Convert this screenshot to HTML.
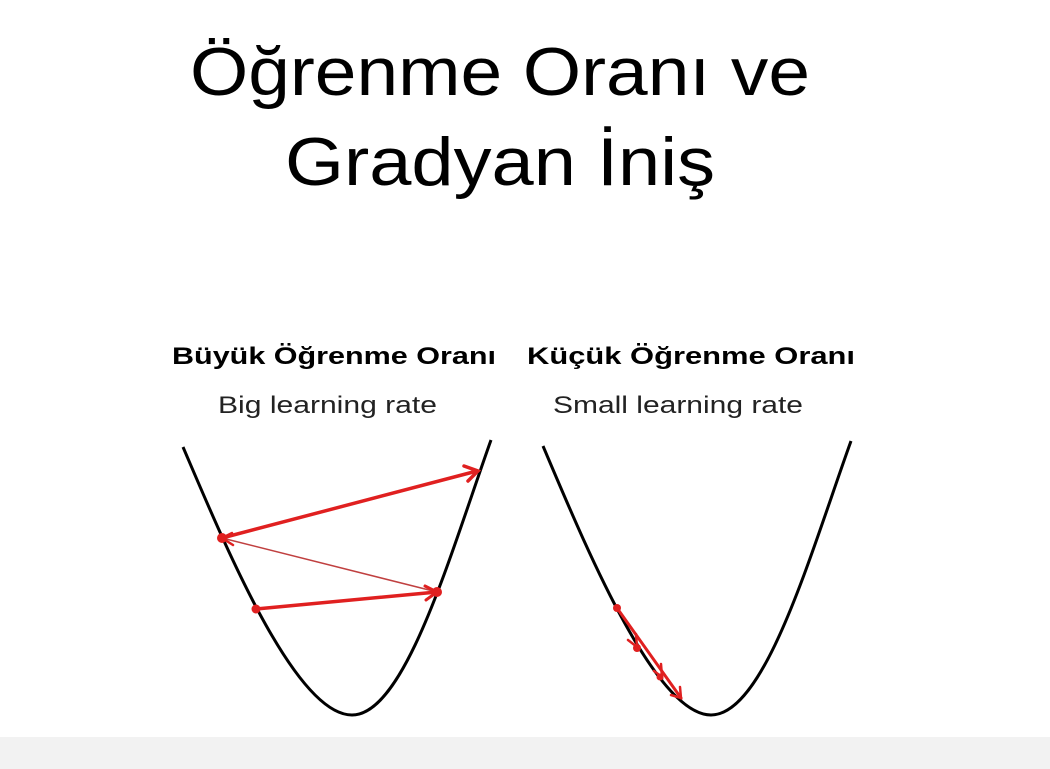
<!DOCTYPE html>
<html><head><meta charset="utf-8"><style>
html,body{margin:0;padding:0;background:#fff;width:1050px;height:769px;overflow:hidden}
svg{display:block}
</style></head><body>
<svg width="1050" height="769" viewBox="0 0 1050 769" xmlns="http://www.w3.org/2000/svg">
<rect x="0" y="0" width="1050" height="769" fill="#fff"/>
<rect x="0" y="737" width="1050" height="32" fill="#f2f2f2"/>
<g font-family="Liberation Sans, DejaVu Sans, sans-serif" fill="#000">
<text x="500" y="95" font-size="68" text-anchor="middle" textLength="620" lengthAdjust="spacingAndGlyphs">Öğrenme Oranı ve</text>
<text x="500" y="185" font-size="68" text-anchor="middle" textLength="430" lengthAdjust="spacingAndGlyphs">Gradyan İniş</text>
<text x="172" y="364" font-size="24" font-weight="bold" textLength="324" lengthAdjust="spacingAndGlyphs">Büyük Öğrenme Oranı</text>
<text x="527" y="364" font-size="24" font-weight="bold" textLength="328" lengthAdjust="spacingAndGlyphs">Küçük Öğrenme Oranı</text>
<text x="218" y="413" font-size="24" fill="#222" textLength="219" lengthAdjust="spacingAndGlyphs">Big learning rate</text>
<text x="553" y="413" font-size="24" fill="#222" textLength="250" lengthAdjust="spacingAndGlyphs">Small learning rate</text>
</g>
<g fill="none" stroke="#000" stroke-width="3">
<path d="M183,447 C225,545 295,715 352,715 C405,715 450,555 491,440"/>
<path d="M543,446 C585,545 655,715 711,715 C765,715 810,555 851,441"/>
</g>
<g stroke="#e02020" fill="none" stroke-linecap="round">
<line x1="222" y1="538" x2="477" y2="471" stroke-width="3.5"/>
<path d="M464,466 L478,471 L468,481" stroke-width="3.5"/>
<path d="M232,533 L222,538 L233,545" stroke-width="2.5"/>
<line x1="222" y1="538" x2="437" y2="592" stroke-width="1.5" stroke="#c04040"/>
<line x1="256" y1="609" x2="437" y2="592" stroke-width="3.5"/>
<path d="M425,586 L437,592 L426,600" stroke-width="3"/>
<line x1="617" y1="608" x2="681" y2="698" stroke-width="3"/>
<path d="M628,640 L637,647 L636,634" stroke-width="2.5"/>
<path d="M654,671 L662,677 L661,664" stroke-width="2.5"/>
<path d="M671,695 L681,698 L680,687" stroke-width="2.5"/>
</g>
<g fill="#e02020">
<circle cx="222" cy="538" r="5"/>
<circle cx="256" cy="609" r="4.5"/>
<circle cx="437" cy="592" r="5"/>
<circle cx="617" cy="608" r="4"/>
<circle cx="637" cy="648" r="4"/>
<circle cx="660" cy="677" r="3.5"/>
</g>
</svg>
</body></html>
